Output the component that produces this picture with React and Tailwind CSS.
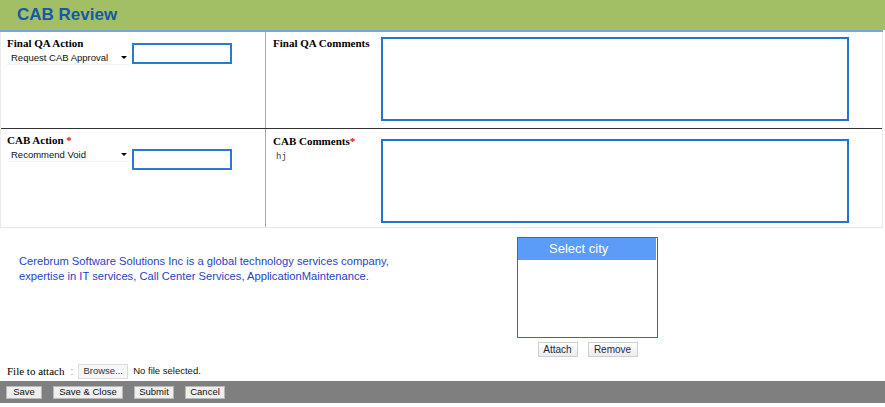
import React from "react";

const serif = { fontFamily: '"Liberation Serif", "Times New Roman", serif' };
const sans = { fontFamily: '"Liberation Sans", Arial, sans-serif' };

function FakeSelect({ value }) {
    return (
        <div className="flex items-center w-[123px] h-[14px] pl-[4px] pr-[3px] border-b border-[#f2f2f2] text-[9.5px] text-[#111]" style={sans}>
            <span className="flex-1 leading-none">{value}</span>
            <span className="w-0 h-0 border-l-[3px] border-r-[3px] border-t-[3px] border-l-transparent border-r-transparent border-t-black" />
        </div>
    );
}

function ActionCell({ label, value, required, inputTop }) {
    return (
        <div className="w-[265px] border-r border-[#a8a8a8] pl-[6px] pt-[5px] flex">
            <div className="flex flex-col w-[125px]">
                <div className="text-[11px] leading-[13px] font-bold text-black" style={serif}>
                    {label}
                    {required && <span className="text-[#e01010]"> *</span>}
                </div>
                <div className="mt-[1px]">
                    <FakeSelect value={value} />
                </div>
            </div>
            <input
                type="text"
                className={`w-[100px] h-[21px] border-2 border-[#2a7ad2] bg-white outline-none ${inputTop}`}
            />
        </div>
    );
}

function CommentCell({ label, required, note, labelTop, boxTop }) {
    return (
        <div className="flex-1 flex pl-[7px]">
            <div className={`w-[108px] ${labelTop}`}>
                <div className="text-[11px] leading-[13px] font-bold text-black" style={serif}>
                    {label}
                    {required && <span className="text-[#e01010]">*</span>}
                </div>
                {note && (
                    <div className="pl-[3px] mt-[3px] text-[9px] leading-[10px] text-[#444]" style={{ fontFamily: '"DejaVu Sans Mono", "Liberation Mono", monospace' }}>
                        {note}
                    </div>
                )}
            </div>
            <textarea className={`w-[468px] h-[84px] ${boxTop} border-2 border-[#1f75d0] resize-none outline-none bg-white`} />
        </div>
    );
}

function SmallButton({ children, className = "" }) {
    return (
        <button
            className={`h-[15px] border border-[#cfcfcf] bg-gradient-to-b from-white to-[#ececec] text-[10px] leading-none text-[#2b1d3a] ${className}`}
            style={sans}
        >
            {children}
        </button>
    );
}

function FooterButton({ children, w }) {
    return (
        <button
            className={`h-[13px] ${w} bg-[#efefef] border border-[#b9b9b9] text-[9.5px] leading-none text-[#111]`}
            style={sans}
        >
            {children}
        </button>
    );
}

export default function App() {
    return (
        <div className="w-[885px] h-[407px] bg-white overflow-hidden" style={sans}>
            <div className="h-[30px] bg-[#a2bf66] flex items-center pl-[17px]">
                <h1 className="text-[17px] font-bold text-[#1559a6]" style={sans}>CAB Review</h1>
            </div>
            <div className="h-[2px] w-[883px] bg-[#74a6e6]" />

            <div className="w-[883px] border-l border-r border-[#ececec]">
                <div className="flex h-[97px] border-b border-[#333]">
                    <ActionCell label="Final QA Action" value="Request CAB Approval" inputTop="mt-[6px]" />
                    <CommentCell label="Final QA Comments" labelTop="pt-[5px]" boxTop="mt-[5px]" />
                </div>
                <div className="flex h-[99px] border-b border-[#e6e6e6]">
                    <ActionCell label="CAB Action" value="Recommend Void" required inputTop="mt-[15px]" />
                    <CommentCell label="CAB Comments" required note="hj" labelTop="pt-[6px]" boxTop="mt-[10px]" />
                </div>
            </div>

            <div className="flex h-[133px]">
                <div className="w-[517px] pl-[19px] pt-[26px]">
                    <p className="text-[11.2px] leading-[15px] text-[#1f45c4]" style={sans}>
                        Cerebrum Software Solutions Inc is a global technology services company,
                        <br />
                        expertise in IT services, Call Center Services, ApplicationMaintenance.
                    </p>
                </div>
                <div className="w-[141px] pt-[9px] flex flex-col items-center">
                    <div className="w-[141px] h-[101px] border border-[#1c73cf] bg-white pr-[1px]">
                        <div className="h-[22px] bg-[#5a9cf7] flex items-center pl-[31px] text-[13px] text-white" style={sans}>
                            Select city
                        </div>
                    </div>
                    <div className="flex gap-[10px] mt-[4px]">
                        <SmallButton className="w-[40px]">Attach</SmallButton>
                        <SmallButton className="w-[50px]">Remove</SmallButton>
                    </div>
                </div>
            </div>

            <div className="h-[20px] flex items-center pl-[7px]">
                <span className="text-[11px] text-black" style={serif}>File to attach</span>
                <span className="ml-[6px] text-[10px] text-[#999]">:</span>
                <span className="ml-[5px] h-[15px] w-[50px] border border-[#dcdcdc] bg-[#f7f7f7] flex items-center justify-center text-[9.5px] text-[#333]" style={sans}>
                    Browse...
                </span>
                <span className="ml-[5px] text-[9.5px] text-[#111]" style={sans}>No file selected.</span>
            </div>

            <div className="h-[22px] bg-[#7f7f7f] flex items-center pl-[6px] gap-[11px]">
                <FooterButton w="w-[36px]">Save</FooterButton>
                <FooterButton w="w-[70px]">Save &amp; Close</FooterButton>
                <FooterButton w="w-[40px]">Submit</FooterButton>
                <FooterButton w="w-[40px]">Cancel</FooterButton>
            </div>
        </div>
    );
}
